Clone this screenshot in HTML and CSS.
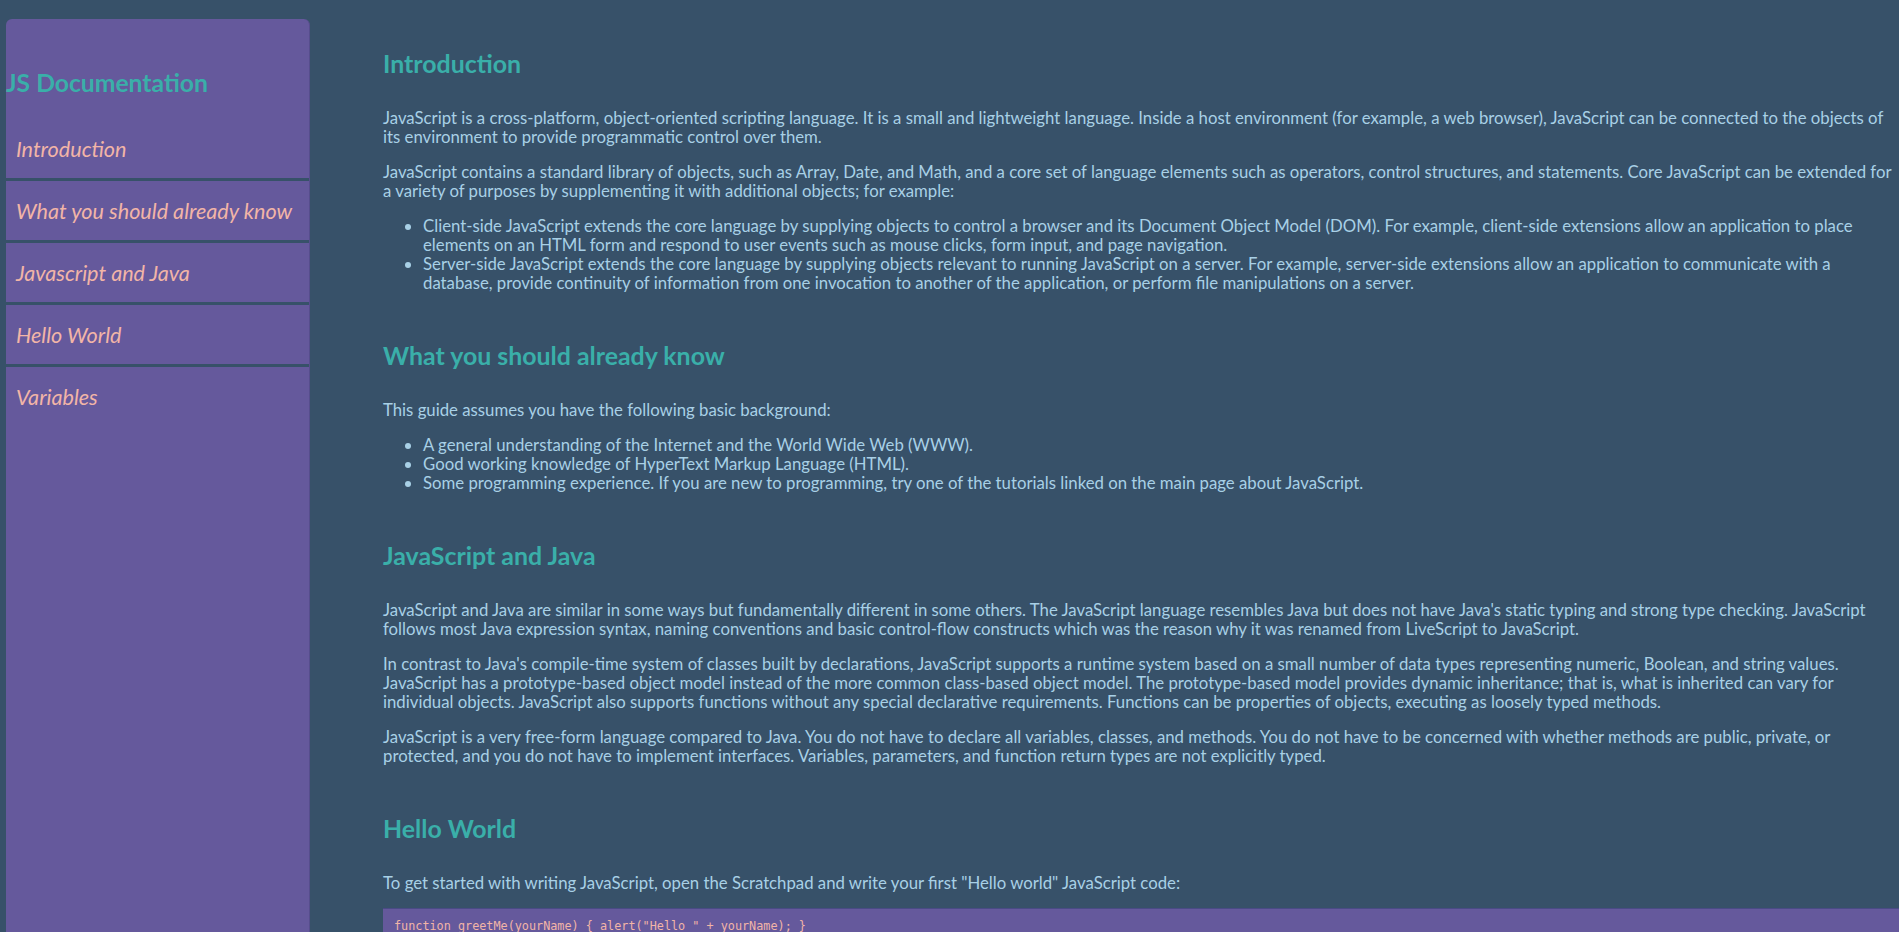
FILE: index.html
```html
<!DOCTYPE html>
<html lang="en">
<head>
<meta charset="utf-8">
<title>JS Documentation</title>
<link rel="stylesheet" href="styles.css">
</head>
<body>
<div class="page">
  <nav class="sidebar" id="navbar">
    <header class="sidebar-title">JS Documentation</header>
    <ul class="nav-list">
      <li><a class="nav-link" href="#introduction">Introduction</a></li>
      <li><a class="nav-link" href="#what-you-should-already-know">What you should already know</a></li>
      <li><a class="nav-link" href="#javascript-and-java">Javascript and Java</a></li>
      <li><a class="nav-link" href="#hello-world">Hello World</a></li>
      <li><a class="nav-link" href="#variables">Variables</a></li>
    </ul>
  </nav>
  <main class="doc" id="main-doc">
    <section class="doc-section" id="introduction">
      <h2 class="section-title">Introduction</h2>
      <p>JavaScript is a cross-platform, object-oriented scripting language. It is a small and lightweight language. Inside a host environment (for example, a web browser), JavaScript can be connected to the objects of its environment to provide programmatic control over them.</p>
      <p>JavaScript contains a standard library of objects, such as Array, Date, and Math, and a core set of language elements such as operators, control structures, and statements. Core JavaScript can be extended for a variety of purposes by supplementing it with additional objects; for example:</p>
      <ul>
        <li>Client-side JavaScript extends the core language by supplying objects to control a browser and its Document Object Model (DOM). For example, client-side extensions allow an application to place elements on an HTML form and respond to user events such as mouse clicks, form input, and page navigation.</li>
        <li>Server-side JavaScript extends the core language by supplying objects relevant to running JavaScript on a server. For example, server-side extensions allow an application to communicate with a database, provide continuity of information from one invocation to another of the application, or perform file manipulations on a server.</li>
      </ul>
    </section>
    <section class="doc-section" id="what-you-should-already-know">
      <h2 class="section-title">What you should already know</h2>
      <p>This guide assumes you have the following basic background:</p>
      <ul>
        <li>A general understanding of the Internet and the World Wide Web (WWW).</li>
        <li>Good working knowledge of HyperText Markup Language (HTML).</li>
        <li>Some programming experience. If you are new to programming, try one of the tutorials linked on the main page about JavaScript.</li>
      </ul>
    </section>
    <section class="doc-section" id="javascript-and-java">
      <h2 class="section-title">JavaScript and Java</h2>
      <p>JavaScript and Java are similar in some ways but fundamentally different in some others. The JavaScript language resembles Java but does not have Java's static typing and strong type checking. JavaScript follows most Java expression syntax, naming conventions and basic control-flow constructs which was the reason why it was renamed from LiveScript to JavaScript.</p>
      <p>In contrast to Java's compile-time system of classes built by declarations, JavaScript supports a runtime system based on a small number of data types representing numeric, Boolean, and string values. JavaScript has a prototype-based object model instead of the more common class-based object model. The prototype-based model provides dynamic inheritance; that is, what is inherited can vary for individual objects. JavaScript also supports functions without any special declarative requirements. Functions can be properties of objects, executing as loosely typed methods.</p>
      <p>JavaScript is a very free-form language compared to Java. You do not have to declare all variables, classes, and methods. You do not have to be concerned with whether methods are public, private, or protected, and you do not have to implement interfaces. Variables, parameters, and function return types are not explicitly typed.</p>
    </section>
    <section class="doc-section" id="hello-world">
      <h2 class="section-title">Hello World</h2>
      <p>To get started with writing JavaScript, open the Scratchpad and write your first "Hello world" JavaScript code:</p>
      <pre class="code-block"><code>function greetMe(yourName) { alert("Hello " + yourName); }</code></pre>
    </section>
  </main>
</div>
</body>
</html>
```

FILE: styles.css
```css
html, body {
  margin: 0;
  height: 100%;
}
body {
  background: #375169;
  color: #a8d0e6;
  font-family: "Lato", "Open Sans", sans-serif;
  font-size: 16.75px;
}
.page {
  display: flex;
  height: 100vh;
  overflow: hidden;
}
.sidebar {
  flex: 0 0 304px;
  margin: 19px 0 0 6px;
  background: #65599c;
  border-radius: 6px 6px 0 0;
  border-right: 1px solid #564d8c;
  box-sizing: border-box;
}
.sidebar-title {
  color: #3aafa9;
  font-size: 24.7px;
  font-weight: 700;
  line-height: 28px;
  padding: 50px 0 22px;
}
.nav-list {
  list-style: none;
  margin: 0;
  padding: 0;
}
.nav-list li {
  border-bottom: 3px solid #375169;
}
.nav-list li:last-child {
  border-bottom: none;
}
.nav-link {
  display: block;
  padding: 19px 10px 17px;
  line-height: 23px;
  font-size: 21.6px;
  font-style: italic;
  color: #f2b5a7;
  text-decoration: none;
}
.doc {
  flex: 1;
  overflow-y: auto;
  scrollbar-width: none;
  padding: 49px 5px 0 73px;
}
.doc-section {
  padding-bottom: 33px;
}
.section-title {
  color: #3aafa9;
  font-size: 24.9px;
  font-weight: 700;
  line-height: 28px;
  margin: 0 0 31px;
}
.doc p {
  margin: 0 0 16px;
  line-height: 19px;
}
.doc ul {
  margin: 0 0 16px;
  padding-left: 40px;
  line-height: 19px;
}
.code-block {
  margin: 0 -5px 0 0;
  background: #65599c;
  border-top: 1px solid #4a4a86;
  color: #f2b5a7;
  font-family: "DejaVu Sans Mono", monospace;
  font-size: 11.8px;
  line-height: 14px;
  padding: 10px 11px;
}
```
